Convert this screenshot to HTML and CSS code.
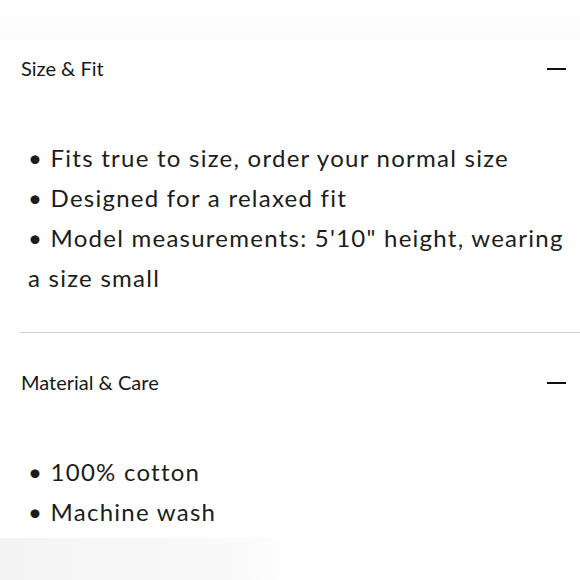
FILE: index.html
```html
<!DOCTYPE html>
<html lang="en">
<head>
<meta charset="utf-8">
<title>Size &amp; Fit</title>
<link rel="stylesheet" href="styles.css">
</head>
<body>
<div class="band-top"></div>
<main class="details">
  <section class="panel">
    <div class="panel-head">
      <span class="panel-title">Size &amp; Fit</span>
      <span class="minus"></span>
    </div>
    <div class="panel-body">
      <p class="item">• Fits true to size, order your normal size</p>
      <p class="item">• Designed for a relaxed fit</p>
      <p class="item">• Model measurements: 5'10" height, wearing<br>a size small</p>
    </div>
  </section>
  <hr class="divider">
  <section class="panel">
    <div class="panel-head">
      <span class="panel-title">Material &amp; Care</span>
      <span class="minus"></span>
    </div>
    <div class="panel-body">
      <p class="item">• 100% cotton</p>
      <p class="item">• Machine wash</p>
    </div>
  </section>
</main>
<div class="band-bottom"></div>
</body>
</html>
```

FILE: styles.css
```css
html, body {
  margin: 0;
  padding: 0;
  background: #ffffff;
}
body {
  width: 580px;
  height: 580px;
  overflow: hidden;
  font-family: Lato, "Noto Sans", sans-serif;
  color: #111111;
}
.band-top {
  height: 40px;
  background: linear-gradient(180deg, #ffffff 0%, #fdfdfd 60%, #fcfcfc 100%);
}
.details {
  padding-left: 20px;
  padding-top: 14px;
}
.panel-head {
  display: flex;
  align-items: center;
  justify-content: space-between;
  height: 28px;
  padding-left: 1px;
  padding-right: 14px;
}
.panel-title {
  font-size: 20px;
  line-height: 28px;
  color: #181818;
}
.minus {
  width: 19px;
  height: 2px;
  background: #111111;
  margin-top: 2px;
}
.panel-body {
  margin-top: 56px;
  padding-left: 8px;
}
.item {
  margin: 0;
  font-size: 24px;
  line-height: 40px;
  letter-spacing: 1.25px;
  white-space: nowrap;
  color: #1c1c1c;
}
.divider {
  margin: 34px 0 35px 0;
  border: 0;
  height: 1px;
  background: #cfcfcf;
}
.band-bottom {
  margin-top: 6px;
  width: 290px;
  height: 42px;
  background: linear-gradient(90deg, #f4f4f4 0%, #f7f7f7 50%, #fafafa 85%, #ffffff 100%);
}
```
